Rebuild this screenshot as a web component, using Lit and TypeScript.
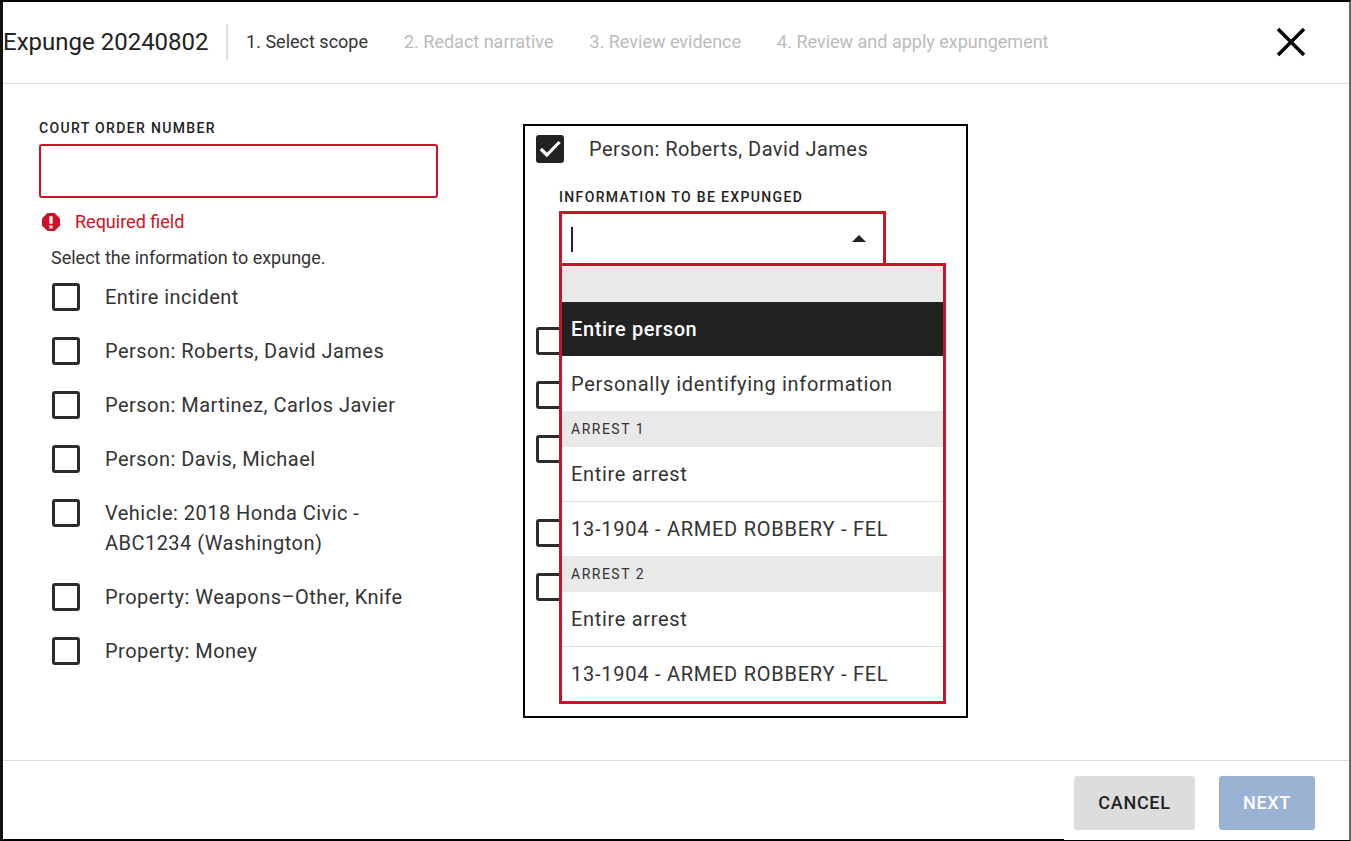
import { LitElement, css, html } from "lit";
import { customElement } from "lit/decorators.js";

const LEFT_ROWS = [
  "Entire incident",
  "Person: Roberts, David James",
  "Person: Martinez, Carlos Javier",
  "Person: Davis, Michael",
  "Vehicle: 2018 Honda Civic - ABC1234 (Washington)",
  "Property: Weapons–Other, Knife",
  "Property: Money",
];

const STEPS = [
  "1. Select scope",
  "2. Redact narrative",
  "3. Review evidence",
  "4. Review and apply expungement",
];

@customElement("app-root")
export class AppRoot extends LitElement {
  static styles = css`
    :host {
      display: block;
      font-family: Roboto, "Liberation Sans", sans-serif;
      color: #222;
    }

    .frame {
      position: relative;
      box-sizing: border-box;
      width: 1351px;
      height: 841px;
      display: flex;
      flex-direction: column;
      background: #fff;
      border-top: 2px solid #000;
      border-left: 3px solid #111;
      border-right: 2px solid #666;
      border-bottom: 1px solid #000;
    }

    .frame::after {
      content: "";
      position: absolute;
      left: 0;
      bottom: 0;
      width: 1061px;
      height: 1px;
      background: #000;
    }

    header {
      height: 79px;
      flex: none;
      display: flex;
      align-items: center;
      border-bottom: 1px solid #ddd;
      padding: 0 43px 2px 0;
    }

    .title {
      font-size: 24px;
      padding-right: 17px;
      height: 36px;
      line-height: 36px;
      border-right: 2px solid #ddd;
    }

    .steps {
      display: flex;
      gap: 36px;
      margin-left: 18.5px;
      font-size: 18px;
      color: #bbb;
      flex: 1;
    }

    .steps .active {
      color: #333;
    }

    .close {
      width: 30px;
      height: 30px;
      display: block;
    }

    main {
      flex: 1;
      display: flex;
      min-height: 0;
      padding: 36px 0 0 36px;
    }

    .left {
      width: 399px;
      flex: none;
    }

    .field-label {
      font-size: 14px;
      font-weight: 500;
      letter-spacing: 1.35px;
      line-height: 16px;
      color: #222;
    }

    .input {
      box-sizing: border-box;
      height: 54px;
      margin-top: 8px;
      border: 2px solid #ce1126;
      border-radius: 3px;
    }

    .error {
      display: flex;
      align-items: center;
      gap: 15px;
      margin: 14px 0 0 3px;
      font-size: 18px;
      line-height: 20px;
      color: #ce1126;
    }

    .error svg {
      width: 18px;
      height: 18px;
    }

    .hint {
      margin: 15px 0 0 12px;
      font-size: 18px;
      line-height: 22px;
      color: #333;
    }

    .rows {
      margin: 13px 0 0 13px;
    }

    .row {
      display: flex;
      gap: 25px;
      font-size: 20px;
      line-height: 30px;
      letter-spacing: 0.47px;
      color: #333;
      padding-bottom: 24px;
    }

    .box {
      box-sizing: border-box;
      flex: none;
      width: 28px;
      height: 28px;
      margin-top: 1px;
      border: 3px solid #2b2b2b;
      border-radius: 3px;
      background: #fff;
    }

    .box.checked {
      margin-top: 0;
      background: #222;
      border-color: #222;
    }

    .box.checked svg {
      display: block;
      width: 22px;
      height: 22px;
    }

    .panel {
      position: relative;
      box-sizing: border-box;
      width: 445px;
      height: 594px;
      margin: 4px 0 0 85px;
      border: 2px solid #000;
      padding: 9px 11px 0;
    }

    .panel .row {
      padding-bottom: 0;
    }

    .panel .top span:last-child {
      margin-top: -1px;
    }

    .expunge {
      margin: 25px 0 0 23px;
      width: 327px;
    }

    .select {
      box-sizing: border-box;
      height: 53px;
      margin-top: 6px;
      border: 3px solid #ce1126;
      border-bottom: none;
      display: flex;
      align-items: center;
      justify-content: space-between;
      padding: 0 17px 0 9px;
    }

    .caret {
      width: 1.5px;
      height: 25px;
      background: #222;
    }

    .arrow {
      width: 0;
      height: 0;
      margin-bottom: 2px;
      border-left: 7px solid transparent;
      border-right: 7px solid transparent;
      border-bottom: 7px solid #222;
    }

    .behind {
      margin-top: 62px;
    }

    .behind .row {
      padding-bottom: 24px;
    }

    /* covered by the open list, they only hold the row height */
    .behind .row span:last-child {
      visibility: hidden;
    }

    .list {
      position: absolute;
      left: 34px;
      top: 137px;
      box-sizing: border-box;
      width: 387px;
      height: 441px;
      border: 3px solid #ce1126;
      background: #fff;
    }

    .group {
      height: 36px;
      padding-left: 9px;
      background: #e9e9e9;
      font-size: 14px;
      line-height: 36px;
      letter-spacing: 1.5px;
      color: #333;
    }

    .option {
      box-sizing: border-box;
      height: 54px;
      padding-left: 9px;
      font-size: 20px;
      line-height: 54px;
      letter-spacing: 0.68px;
      color: #333;
    }

    .option.code {
      letter-spacing: 0.75px;
    }

    .option.tall {
      height: 55px;
      line-height: 56px;
    }

    .option.rule {
      height: 55px;
      border-bottom: 1px solid #ddd;
    }

    .option.selected {
      background: #222;
      color: #fff;
      font-weight: 500;
      letter-spacing: 0.6px;
    }

    footer {
      height: 80px;
      flex: none;
      box-sizing: border-box;
      border-top: 1px solid #ddd;
      display: flex;
      justify-content: flex-end;
      align-items: flex-start;
      gap: 24px;
      padding: 15px 34px 0 0;
    }

    button {
      height: 54px;
      border: none;
      border-radius: 3px;
      padding: 0 0 2px;
      font-family: inherit;
      font-size: 18px;
      font-weight: 500;
      letter-spacing: 0.7px;
    }

    .cancel {
      width: 121px;
      background: #ddd;
      color: #222;
    }

    .next {
      width: 96px;
      background: #9ab3d3;
      color: #fff;
    }
  `;

  row(label: string, checked = false) {
    return html`<div class="row ${checked ? "top" : ""}">
      <span class="box ${checked ? "checked" : ""}">
        ${checked
          ? html`<svg viewBox="0 0 22 22" fill="none" stroke="#fff" stroke-width="3.2">
              <path d="M1.8 11l6 6L20.6 4" />
            </svg>`
          : ""}
      </span>
      <span>${label}</span>
    </div>`;
  }

  render() {
    return html`<div class="frame">
      <header>
        <div class="title">Expunge 20240802</div>
        <div class="steps">
          ${STEPS.map(
            (s, i) => html`<span class=${i === 0 ? "active" : ""}>${s}</span>`
          )}
        </div>
        <svg class="close" viewBox="0 0 30 30" fill="none" stroke="#000" stroke-width="3.5">
          <path d="M2 2l26 26M28 2L2 28" />
        </svg>
      </header>
      <main>
        <section class="left">
          <div class="field-label">COURT ORDER NUMBER</div>
          <div class="input"></div>
          <div class="error">
            <svg viewBox="0 0 18 18">
              <path fill="#ce1126" d="M5.5 0h7L18 5.5v7L12.5 18h-7L0 12.5v-7z" />
              <path fill="#fff" d="M7.4 3.3h3.2v7.4H7.4zM7.4 12.4h3.2v3H7.4z" />
            </svg>
            <span>Required field</span>
          </div>
          <div class="hint">Select the information to expunge.</div>
          <div class="rows">${LEFT_ROWS.map((r) => this.row(r))}</div>
        </section>
        <section class="panel">
          ${this.row("Person: Roberts, David James", true)}
          <div class="expunge">
            <div class="field-label">INFORMATION TO BE EXPUNGED</div>
            <div class="select">
              <span class="caret"></span>
              <span class="arrow"></span>
            </div>
          </div>
          <div class="behind">${LEFT_ROWS.slice(2).map((r) => this.row(r))}</div>
          <div class="list">
            <div class="group"></div>
            <div class="option selected">Entire person</div>
            <div class="option tall">Personally identifying information</div>
            <div class="group">ARREST 1</div>
            <div class="option rule">Entire arrest</div>
            <div class="option code">13-1904 - ARMED ROBBERY - FEL</div>
            <div class="group">ARREST 2</div>
            <div class="option rule">Entire arrest</div>
            <div class="option code">13-1904 - ARMED ROBBERY - FEL</div>
          </div>
        </section>
      </main>
      <footer>
        <button class="cancel">CANCEL</button>
        <button class="next">NEXT</button>
      </footer>
    </div>`;
  }
}
